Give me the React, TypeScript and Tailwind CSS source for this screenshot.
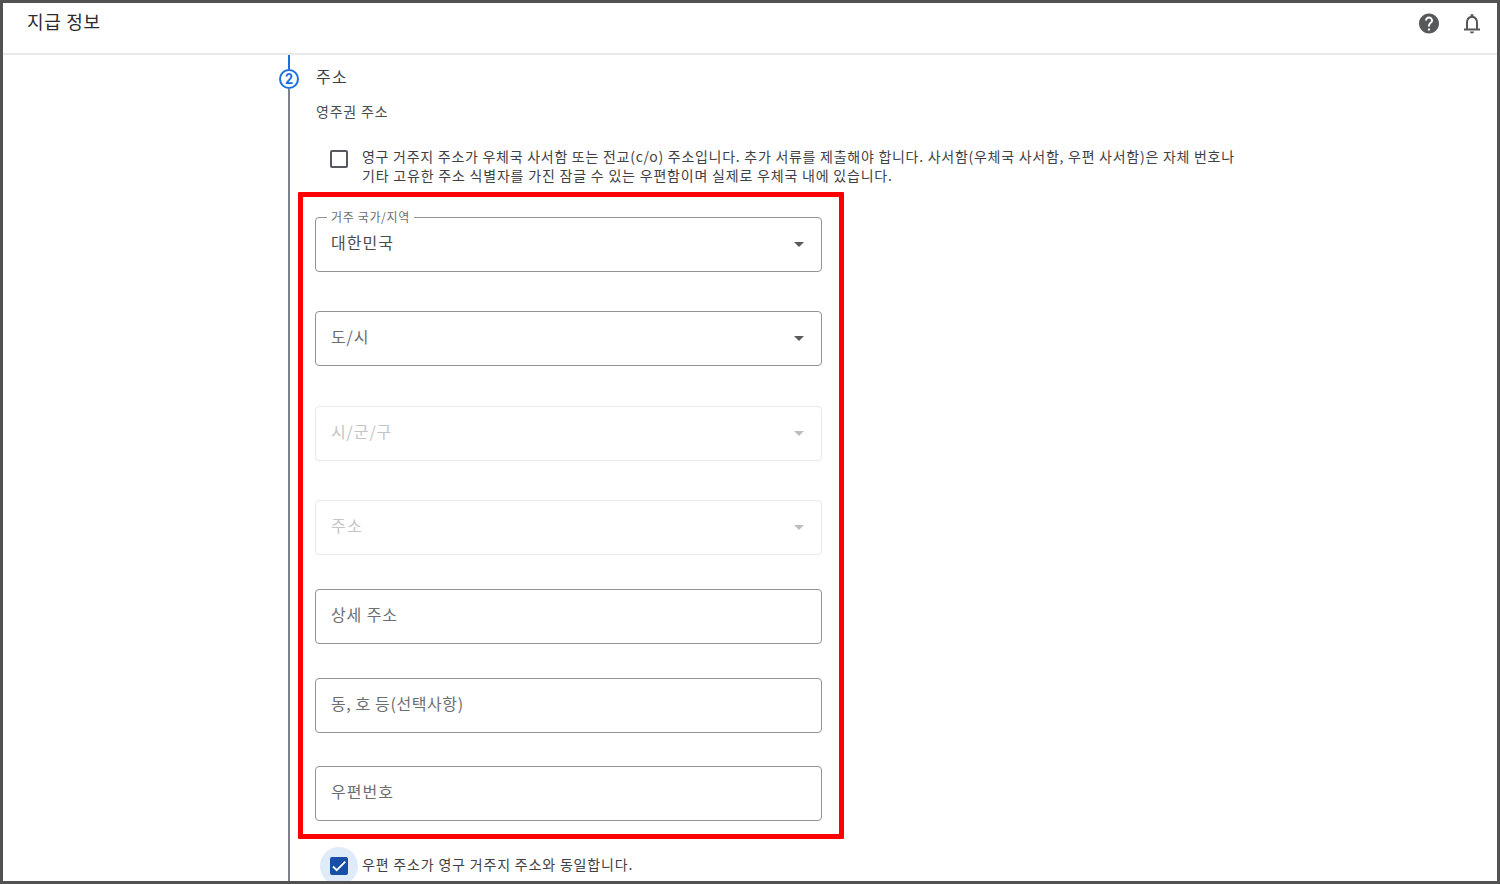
import React from "react";

function Arrow({ disabled }: { disabled?: boolean }) {
  return (
    <svg
      width="10"
      height="5"
      viewBox="0 0 10 5"
      className={disabled ? "shrink-0 text-[#bdbdbd]" : "shrink-0 text-[#5a5a5c]"}
    >
      <path d="M0 0h10L5 5z" fill="currentColor" />
    </svg>
  );
}

type FieldProps = {
  text: string;
  label?: string;
  select?: boolean;
  disabled?: boolean;
  filled?: boolean;
  className?: string;
};

function Field({ text, label, select, disabled, filled, className = "tracking-[1px]" }: FieldProps) {
  const border = disabled ? "border-[#e9e9ea]" : "border-[#919396]";
  const color = disabled ? "text-[#c4c4c4]" : filled ? "text-[#4a4b4e]" : "text-[#6c6e72]";
  return (
    <div
      className={`relative flex h-[55px] w-[507px] items-center justify-between rounded-[4px] border pl-[15px] pr-[17px] ${border} ${className}`}
    >
      {label && (
        <span className="absolute -top-[10px] left-[11px] bg-white pl-1 pr-[4px] text-[12px] leading-[18px] tracking-[0.65px] text-[#6c6e72]">
          {label}
        </span>
      )}
      <span className={`-mt-[5px] text-[16px] leading-6 ${color}`}>{text}</span>
      {select && <Arrow disabled={disabled} />}
    </div>
  );
}

function Header() {
  return (
    <header className="flex h-[52px] shrink-0 items-start justify-between border-b-2 border-[#e7e8e8] pl-[24px] pr-[13px]">
      <h1 className="mt-[5px] text-[18px] leading-[27px] tracking-[0.7px] text-[#2b2c2f]">지급 정보</h1>
      <div className="mt-[8px] flex items-center gap-[19px]">
        <svg width="24" height="24" viewBox="0 -0.4 24 24" fill="#56585c">
          <path d="M12 2C6.48 2 2 6.48 2 12s4.48 10 10 10 10-4.48 10-10S17.52 2 12 2zm1 17h-2v-2h2v2zm2.07-7.75l-.9.92C13.45 12.9 13 13.5 13 15h-2v-.5c0-1.1.45-2.1 1.17-2.83l1.24-1.26c.37-.36.59-.86.59-1.41 0-1.1-.9-2-2-2s-2 .9-2 2H8c0-2.21 1.79-4 4-4s4 1.79 4 4c0 .88-.36 1.68-.93 2.25z" />
        </svg>
        <svg width="24" height="24" viewBox="0 -0.4 24 24" fill="#56585c">
          <path d="M12 22c1.1 0 2-.9 2-2h-4c0 1.1.9 2 2 2zm6-5v-6c0-3.07-1.63-5.64-4.5-6.32V4c0-.83-.67-1.5-1.5-1.5s-1.5.67-1.5 1.5v.68C7.64 5.36 6 7.92 6 11v6H4v2h16v-2h-2zm-2 0H8v-6c0-2.48 1.51-4.5 4-4.5s4 2.02 4 4.5v6z" />
        </svg>
      </div>
    </header>
  );
}

function StepRail() {
  return (
    <div className="flex w-5 shrink-0 flex-col items-center">
      <div className="h-[14px] w-[2px] bg-[#1a6fe0]" />
      <div className="flex h-5 w-5 shrink-0 items-center justify-center rounded-full border-2 border-[#1b70dc] font-['Roboto','Noto_Sans_CJK_KR',sans-serif] text-[14px] font-bold leading-none text-[#1b70dc]">
        2
      </div>
      <div className="w-[2px] flex-1 bg-[#7c818c]" />
    </div>
  );
}

export default function App() {
  return (
    <div className="flex h-[884px] w-[1500px] flex-col overflow-hidden border-[3px] border-[#525252] bg-white font-['Noto_Sans_CJK_KR',sans-serif]">
      <Header />
      <main className="flex min-h-0 flex-1 overflow-hidden pl-[276px]">
        <StepRail />
        <div className="flex shrink-0 flex-col">
          <h2 className="ml-[17px] mt-[9px] text-[16px] leading-6 tracking-[1.2px] text-[#3c4043]">주소</h2>
          <p className="ml-[17px] mt-[13px] text-[14px] leading-5 tracking-[0.8px] text-[#4b4d50]">영주권 주소</p>
          <div className="ml-[31px] mt-[27px] flex h-[44px] shrink-0 items-start">
            <span className="mt-[2px] h-[18px] w-[18px] shrink-0 rounded-[2px] border-2 border-[#56595d]" />
            <p className="-mt-px ml-[14px] whitespace-nowrap text-[14px] leading-[19px] tracking-[0.73px] text-[#3f4145]">
              영구 거주지 주소가 우체국 사서함 또는 전교(c/o) 주소입니다. 추가 서류를 제출해야 합니다. 사서함(우체국 사서함, 우편 사서함)은 자체 번호나
              <br />
              <span className="tracking-[0.8px]">
                기타 고유한 주소 식별자를 가진 잠글 수 있는 우편함이며 실제로 우체국 내에 있습니다.
              </span>
            </p>
          </div>
          <section className="-ml-px h-[647px] w-[546px] shrink-0 rounded-[1px] border-[5px] border-[#ff0000] pl-[12px] pt-[20px]">
            <Field label="거주 국가/지역" text="대한민국" select filled />
            <Field text="도/시" select className="mt-[39px] tracking-[0.9px]" />
            <Field text="시/군/구" select disabled className="mt-[40px] tracking-[0.9px]" />
            <Field text="주소" select disabled className="mt-[39px] tracking-[1.2px]" />
            <Field text="상세 주소" className="mt-[34px] tracking-[0.9px]" />
            <Field text="동, 호 등(선택사항)" className="mt-[34px] tracking-[0.6px]" />
            <Field text="우편번호" className="mt-[33px] tracking-[1px]" />
          </section>
          <div className="ml-[21px] mt-[8px] flex shrink-0 items-start">
            <span className="flex h-[38px] w-[38px] items-center justify-center rounded-full bg-[#e0ebf9]">
              <span className="flex h-[18px] w-[18px] items-center justify-center rounded-[2px] bg-[#174ea6]">
                <svg width="14" height="14" viewBox="0 0 24 24" fill="none" stroke="white" strokeWidth="3.2">
                  <path d="M1.73 12.91l6.37 6.37L22.79 4.59" />
                </svg>
              </span>
            </span>
            <p className="ml-[4px] mt-[8px] whitespace-nowrap text-[14px] leading-[19px] tracking-[0.82px] text-[#3f4145]">
              우편 주소가 영구 거주지 주소와 동일합니다.
            </p>
          </div>
        </div>
      </main>
    </div>
  );
}
